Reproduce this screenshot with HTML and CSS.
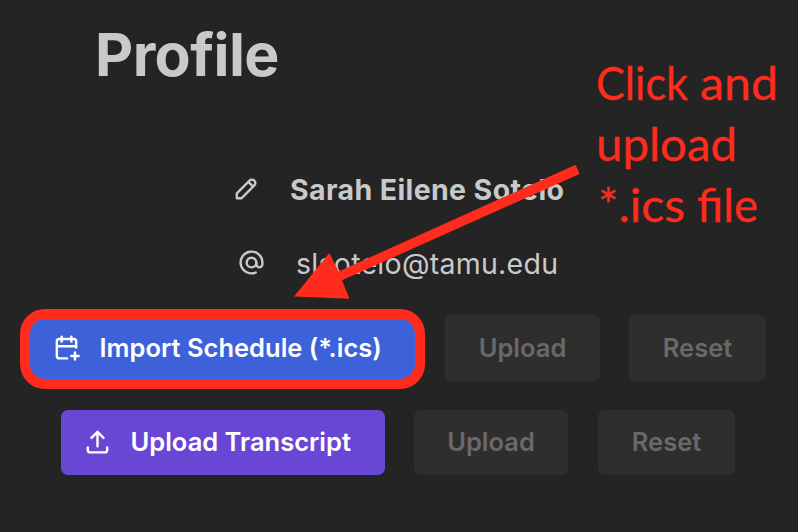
FILE: index.html
```html
<!DOCTYPE html>
<html lang="en">
<head>
<meta charset="utf-8">
<title>Profile</title>
<link rel="stylesheet" href="styles.css">
</head>
<body>
<main class="profile">
  <h1 class="title">Profile</h1>
  <div class="row name-row">
    <svg class="icon" viewBox="0 0 24 24"><path d="M4 20h4L18.500 9.500a2.828 2.828 0 1 0-4-4L4 16v4M13.500 6.500l4 4"/></svg>
    <strong class="name">Sarah Eilene Sotelo</strong>
  </div>
  <div class="row email-row">
    <svg class="icon" viewBox="0 0 24 24"><circle cx="12" cy="12" r="4"/><path d="M16 12v1.500a2.500 2.500 0 0 0 5 0V12a9 9 0 1 0-5.500 8.280"/></svg>
    <span class="email">slsotelo@tamu.edu</span>
  </div>
  <div class="actions schedule-actions">
    <button class="button import">
      <svg class="icon" viewBox="0 0 24 24"><path d="M12.500 21H6a2 2 0 0 1-2-2V7a2 2 0 0 1 2-2h12a2 2 0 0 1 2 2v5M16 3v4M8 3v4M4 11h16M16 19h6M19 16v6"/></svg>
      <span>Import Schedule (*.ics)</span>
    </button>
    <button class="button upload" disabled>Upload</button>
    <button class="button reset" disabled>Reset</button>
  </div>
  <div class="actions transcript-actions">
    <button class="button transcript">
      <svg class="icon" viewBox="0 0 24 24"><path d="M4 17v2a2 2 0 0 0 2 2h12a2 2 0 0 0 2-2v-2M7 9l5-5 5 5M12 4v12"/></svg>
      <span>Upload Transcript</span>
    </button>
    <button class="button upload" disabled>Upload</button>
    <button class="button reset" disabled>Reset</button>
  </div>
</main>
<svg class="annotation" viewBox="0 0 798 532">
  <path class="arrow" d="M294 296.500 329.300 253 338.500 271.500 575.700 164.700 579.500 174 342 280.300 349.500 298.700Z"/>
  <text class="note" x="596" y="100" textLength="92" lengthAdjust="spacingAndGlyphs">Click</text>
  <text class="note" x="700" y="100" textLength="78" lengthAdjust="spacingAndGlyphs">and</text>
  <text class="note" x="596" y="161" textLength="141" lengthAdjust="spacingAndGlyphs">upload</text>
  <text class="note" x="598" y="222" textLength="87" lengthAdjust="spacingAndGlyphs">*.ics</text>
  <text class="note" x="697" y="222" textLength="61" lengthAdjust="spacingAndGlyphs">file</text>
</svg>
</body>
</html>
```
FILE: styles.css
```css
* { box-sizing: border-box; }
body {
  margin: 0;
  width: 798px;
  height: 532px;
  overflow: hidden;
  background: #242424;
  color: #c9c9c9;
  font-family: Inter, sans-serif;
}
.profile { display: flex; flex-direction: column; }
.title {
  margin: 18px 0 0 95px;
  height: 74px;
  font-size: 59px;
  line-height: 74px;
  font-weight: 700;
  letter-spacing: -0.6px;
}
.row { display: flex; align-items: center; height: 44px; white-space: nowrap; }
.name-row { margin: 75px 0 0 231.5px; gap: 29.5px; }
.email-row { margin: 30px 0 0 237px; gap: 30px; }
.icon {
  width: 29px;
  height: 29px;
  flex: none;
  fill: none;
  stroke: currentColor;
  stroke-width: 2;
  stroke-linecap: round;
  stroke-linejoin: round;
}
.row .icon { margin-top: -1px; }
.name { font-size: 28.5px; font-weight: 700; letter-spacing: 0.38px; }
.email { font-size: 28.5px; letter-spacing: 0.27px; }
.actions { display: flex; align-items: flex-start; gap: 29px; }
.schedule-actions { margin: 24px 0 0 20px; height: 80px; }
.transcript-actions { margin: 21px 0 0 61px; height: 65px; }
.button {
  display: flex;
  align-items: center;
  justify-content: center;
  padding: 0 0 2px;
  height: 65px;
  border: 0;
  border-radius: 7px;
  background: #2e2e2e;
  color: #696969;
  font: 600 25.5px/1 Inter, sans-serif;
  white-space: nowrap;
}
.schedule-actions .upload, .schedule-actions .reset { height: 66px; margin-top: 6px; padding-bottom: 1px; }
.import, .transcript { justify-content: flex-start; color: #fff; }
.import {
  width: 405px;
  height: 80px;
  margin-right: -9px;
  padding-left: 22px;
  gap: 18.5px;
  border: 10px solid #ff2b1c;
  border-radius: 25px;
  background: #3d61d8;
}
.import .icon { margin-top: -2px; }
.transcript { width: 324px; padding-left: 22px; gap: 18.5px; background: #6847d4; }
.upload { width: 155px; }
.transcript-actions .upload { width: 154px; margin-right: 1px; }
.reset { width: 137px; }
.annotation { position: absolute; left: 0; top: 0; width: 798px; height: 532px; pointer-events: none; }
.arrow, .note { fill: #ff2b1c; }
.note { font: 400 46px Lato, sans-serif; stroke: #ff2b1c; stroke-width: 0.3; }
```
